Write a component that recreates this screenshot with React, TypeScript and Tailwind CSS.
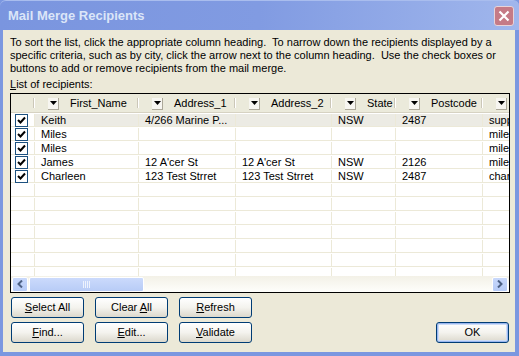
import React from 'react';

// Mail Merge Recipients dialog, XP (inactive window) look

const font = { fontFamily: '"Liberation Sans", Arial, sans-serif' };

type Row = { name: string; addr1: string; addr2: string; state: string; post: string; extra: string };

const rows: Row[] = [
  { name: 'Keith', addr1: '4/266 Marine P...', addr2: '', state: 'NSW', post: '2487', extra: 'supp' },
  { name: 'Miles', addr1: '', addr2: '', state: '', post: '', extra: 'miles' },
  { name: 'Miles', addr1: '', addr2: '', state: '', post: '', extra: 'miles' },
  { name: 'James', addr1: "12 A'cer St", addr2: "12 A'cer St", state: 'NSW', post: '2126', extra: 'miles' },
  { name: 'Charleen', addr1: '123 Test Strret', addr2: '123 Test Strret', state: 'NSW', post: '2487', extra: 'char' },
];

function DropArrow() {
  return (
    <span className="w-[11px] h-[12px] bg-[#f7f6f1] border-r border-b border-[#aca899] flex items-center justify-center shrink-0">
      <svg width="7" height="4" viewBox="0 0 7 4">
        <path d="M0 0h7L3.5 4z" fill="#000" />
      </svg>
    </span>
  );
}

function HeaderCell({ label, w }: { label?: string; w: string }) {
  return (
    <div className={`${w} h-full shrink-0 flex items-center relative`}>
      {label !== undefined && (
        <>
          <span className="ml-[13px]"><DropArrow /></span>
          <span className="ml-[11px] whitespace-nowrap">{label}</span>
        </>
      )}
      <span className="absolute right-0 top-[3px] bottom-[4px] w-[2px] border-l border-[#cbc7b8] border-r border-r-white" />
    </div>
  );
}

function Check() {
  return (
    <span className="w-[13px] h-[13px] border border-[#1c5180] bg-white flex items-center justify-center">
      <svg width="9" height="9" viewBox="0 0 9 9">
        <path d="M1 4l2.5 2.5L8 1.5" stroke="#000" strokeWidth="2" fill="none" />
      </svg>
    </span>
  );
}

function Cell({ w, text, hl }: { w: string; text?: string; hl?: boolean }) {
  return (
    <div className={`${w} h-full shrink-0 border-r border-[#ece9d8] pl-[6px] flex items-center whitespace-nowrap overflow-hidden ${hl ? 'bg-[#ecebe4]' : ''}`}>
      {text}
    </div>
  );
}

function XpButton({ children, def }: { children: React.ReactNode; def?: boolean }) {
  return (
    <button
      className={`w-[73px] h-[21px] rounded-[3px] border border-[#003c74] bg-gradient-to-b from-white via-[#f4f3ee] to-[#dcd8cc] text-[11px] text-black flex items-center justify-center ${def ? 'shadow-[inset_0_0_0_1px_#9ab7ef,inset_0_0_0_2px_#cddcf6]' : ''}`}
    >
      <span className="whitespace-pre">{children}</span>
    </button>
  );
}

export default function App() {
  const empty: Row = { name: '', addr1: '', addr2: '', state: '', post: '', extra: '' };
  const allRows = [...rows, ...Array(8).fill(empty)];

  return (
    <div className="w-[519px] h-[356px] bg-[#7b97e0] flex flex-col overflow-hidden text-[11px] text-black" style={font}>
      {/* Title bar */}
      <div className="h-[30px] shrink-0 rounded-t-[6px] bg-gradient-to-r from-[#7a95df] via-[#819be2] to-[#a0b6ec] flex items-center pl-[8px] pr-[5px] border-t border-[#a9bdee]">
        <span className="text-[13px] font-bold text-[#dbe5f8] flex-1">Mail Merge Recipients</span>
        <span className="w-[20px] h-[20px] rounded-[3px] border border-[#e8d3d8] bg-[#c57a86] flex items-center justify-center">
          <svg width="12" height="12" viewBox="0 0 12 12">
            <path d="M1.5 1.5l9 9M10.5 1.5l-9 9" stroke="#fff" strokeWidth="2.2" />
          </svg>
        </span>
      </div>

      {/* Body */}
      <div className="flex-1 ml-[3px] mr-[4px] mb-[4px] bg-[#ece9d8] pl-[7px] pr-[5px] pt-[6px] flex flex-col">
        <p className="leading-[13px]">
          To sort the list, click the appropriate column heading.&nbsp; To narrow down the recipients displayed by a specific criteria, such as by city, click the arrow next to the column heading.&nbsp; Use the check boxes or buttons to add or remove recipients from the mail merge.
        </p>
        <p className="leading-[13px] mt-[3px]">
          <span className="underline">L</span>ist of recipients:
        </p>

        {/* List */}
        <div className="mt-[2px] w-[500px] h-[200px] border border-black bg-white flex flex-col overflow-hidden">
          <div className="h-[19px] shrink-0 bg-[#ebeadb] border-b border-[#d6d2c2] flex overflow-hidden pt-[1px]">
            <HeaderCell w="w-[24px]" />
            <HeaderCell w="w-[104px]" label="First_Name" />
            <HeaderCell w="w-[97px]" label="Address_1" />
            <HeaderCell w="w-[96px]" label="Address_2" />
            <HeaderCell w="w-[64px]" label="State" />
            <HeaderCell w="w-[87px]" label="Postcode" />
            <HeaderCell w="w-[60px]" label="" />
          </div>

          <div className="flex-1 overflow-hidden">
            {allRows.map((r, i) => (
              <div key={i} className="h-[14px] flex border-b border-[#ece9d8] leading-[13px] pt-[1px]">
                <div className="w-[24px] h-full shrink-0 border-r border-[#ece9d8] flex items-center pl-[4px]">
                  {i < rows.length && <Check />}
                </div>
                <Cell w="w-[104px]" text={r.name} hl={i === 0} />
                <Cell w="w-[97px]" text={r.addr1} hl={i === 0} />
                <Cell w="w-[96px]" text={r.addr2} hl={i === 0} />
                <Cell w="w-[64px]" text={r.state} hl={i === 0} />
                <Cell w="w-[87px]" text={r.post} hl={i === 0} />
                <Cell w="w-[60px]" text={r.extra} hl={i === 0} />
              </div>
            ))}
          </div>

          {/* Horizontal scrollbar */}
          <div className="h-[16px] shrink-0 bg-gradient-to-b from-[#f3f1e7] to-[#fefefb] flex items-center gap-[1px] px-[1px]">
            <span className="w-[16px] h-[15px] rounded-[2px] border border-white bg-gradient-to-b from-[#c8d8fb] to-[#b6cbf7] flex items-center justify-center">
              <svg width="6" height="8" viewBox="0 0 6 8">
                <path d="M5 0.5L1.5 4 5 7.5" stroke="#4d6185" strokeWidth="2" fill="none" />
              </svg>
            </span>
            <span className="w-[115px] h-[15px] rounded-[2px] border border-[#fff] bg-gradient-to-b from-[#cbdafc] to-[#b8ccf6] flex items-center justify-center">
              <svg width="8" height="7" viewBox="0 0 8 7">
                <path d="M0.5 0v7M2.5 0v7M4.5 0v7M6.5 0v7" stroke="#eef3fd" strokeWidth="1" />
              </svg>
            </span>
            <span className="flex-1" />
            <span className="w-[16px] h-[15px] rounded-[2px] border border-white bg-gradient-to-b from-[#c8d8fb] to-[#b6cbf7] flex items-center justify-center">
              <svg width="6" height="8" viewBox="0 0 6 8">
                <path d="M1 0.5L4.5 4 1 7.5" stroke="#4d6185" strokeWidth="2" fill="none" />
              </svg>
            </span>
          </div>
        </div>

        {/* Buttons */}
        <div className="mt-[4px] pl-[1px] flex gap-[11px]">
          <XpButton><span className="underline">S</span>elect All</XpButton>
          <XpButton>Clear <span className="underline">A</span>ll</XpButton>
          <XpButton><span className="underline">R</span>efresh</XpButton>
        </div>
        <div className="mt-[4px] pl-[1px] flex gap-[11px]">
          <XpButton><span className="underline">F</span>ind...</XpButton>
          <XpButton><span className="underline">E</span>dit...</XpButton>
          <XpButton><span className="underline">V</span>alidate</XpButton>
          <span className="flex-1" />
          <span className="mr-[1px]"><XpButton def>OK</XpButton></span>
        </div>
      </div>
    </div>
  );
}
